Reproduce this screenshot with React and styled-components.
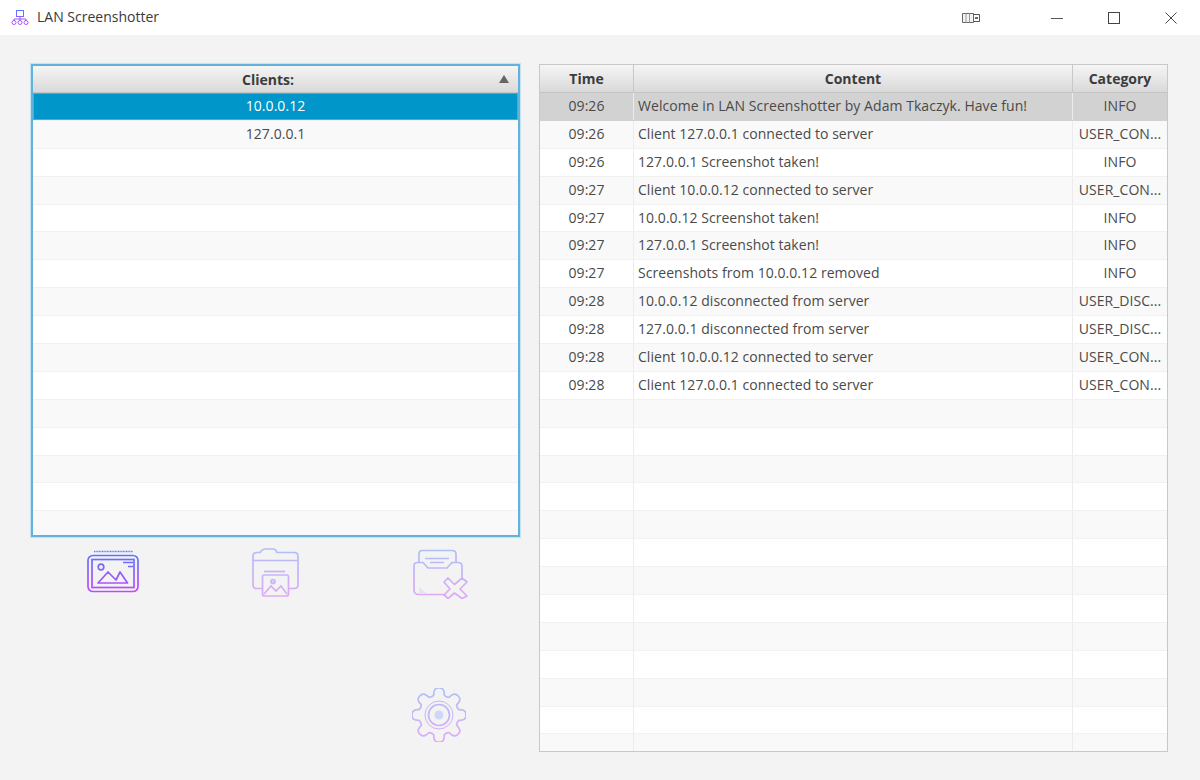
import React from 'react';
import styled, { createGlobalStyle } from 'styled-components';

const GlobalStyle = createGlobalStyle`
  * {
    box-sizing: border-box;
    margin: 0;
    padding: 0;
  }
  body {
    background: #f3f3f3;
    font-family: "Open Sans", "Noto Sans", sans-serif;
    color: #333;
  }
`

const Window = styled.div`
  width: 1200px;
  height: 780px;
  overflow: hidden;
  display: flex;
  flex-direction: column;
`
const TitleBar = styled.div`
  height: 35px;
  flex: none;
  background: #fff;
  display: flex;
  align-items: center;
  padding: 0 1px 0 11px;
`
const AppTitle = styled.span`
  font-size: 14px;
  color: #3a3a3a;
  margin: 0 0 2px 8px;
  flex: 1;
`
const TrayButton = styled.div`
  width: 20px;
  height: 12px;
  margin-right: 47px;
  display: flex;
`
const WinButton = styled.div`
  width: 57px;
  display: flex;
  justify-content: center;
  align-items: center;
`
const Main = styled.div`
  flex: 1;
  min-height: 0;
  display: flex;
  padding: 29px 32px 28px 31px;
  gap: 19px;
`
const LeftColumn = styled.div`
  width: 489px;
  flex: none;
  display: flex;
  flex-direction: column;
`
const ClientsTable = styled.div`
  height: 473px;
  flex: none;
  background: #fff;
  border: 2px solid #62b2dc;
  box-shadow: 0 0 1px 1px #c6e3f2;
  overflow: hidden;
  display: flex;
  flex-direction: column;
`
const LogTable = styled.div`
  flex: 1;
  min-height: 0;
  background: #fff;
  border: 1px solid #c8c8c8;
  overflow: hidden;
  display: flex;
  flex-direction: column;
`
const HeaderRow = styled.div`
  height: ${p => p.$height || 28}px;
  flex: none;
  display: flex;
  background: linear-gradient(#f5f5f5, #d9d9d9);
  border-bottom: 1px solid #c4c4c4;
`
const HeaderCell = styled.div`
  position: relative;
  flex: ${p => p.$flex ? 1 : 'none'};
  width: ${p => p.$width ? p.$width + 'px' : 'auto'};
  display: flex;
  align-items: center;
  justify-content: center;
  padding-right: ${p => p.$sorted ? '15px' : '0'};
  font-size: 14px;
  font-weight: 700;
  color: #3c3c3c;
  border-right: ${p => p.$last ? 'none' : '1px solid #c8c8c8'};
`
const SortArrow = styled.span`
  position: absolute;
  right: 9px;
  top: 9px;
  width: 0;
  height: 0;
  border-left: 5.5px solid transparent;
  border-right: 5.5px solid transparent;
  border-bottom: 8px solid #666;
`
const Row = styled.div`
  height: 27.9px;
  flex: none;
  display: flex;
  align-items: center;
  font-size: 14px;
  color: ${p => p.$active ? '#fff' : '#4a4a4a'};
  background: ${p => p.$active ? '#0096c9' : p.$selected ? '#d2d2d2' : p.$odd ? '#f9f9f9' : '#fff'};
  box-shadow: ${p => p.$active ? 'inset 0 0 0 1px #3fb0d8' : 'none'};
  border-bottom: 1px solid ${p => p.$selected ? '#d2d2d2' : '#f1f1f1'};
`
const Cell = styled.div`
  flex: ${p => p.$flex ? 1 : 'none'};
  width: ${p => p.$width ? p.$width + 'px' : 'auto'};
  height: 100%;
  display: flex;
  align-items: center;
  justify-content: ${p => p.$left ? 'flex-start' : 'center'};
  padding: 0 4px 2px;
  letter-spacing: 0.05px;
  white-space: nowrap;
  overflow: hidden;
  border-right: ${p => p.$last ? 'none' : '1px solid #ececec'};
`
const ToolGrid = styled.div`
  display: grid;
  grid-template-columns: repeat(3, 163px);
  grid-template-rows: 72px 123px;
  padding-top: 10px;
`
const ToolButton = styled.div`
  display: flex;
  justify-content: center;
  align-items: ${p => p.$bottom ? 'flex-end' : 'flex-start'};
  padding-top: ${p => p.$drop || 0}px;
  opacity: ${p => p.$dim ? 0.42 : 1};
  grid-column: ${p => p.$column || 'auto'};
`
const RightColumn = styled.div`
  flex: 1;
  min-height: 0;
  display: flex;
  flex-direction: column;
`

const Grad = ({ id, y1, y2 }) => (
  <defs>
    <linearGradient id={id} gradientUnits="userSpaceOnUse" x1="0" x2="0" y1={y1} y2={y2}>
      <stop offset="0" stopColor="#4f7bff" />
      <stop offset="1" stopColor="#c845ff" />
    </linearGradient>
  </defs>
)

const AppIcon = () => (
  <svg width="18" height="17" viewBox="0 0 18 17" fill="none" stroke="url(#g-app)" strokeWidth="1">
    <Grad id="g-app" y1="0" y2="17" />
    <rect x="5.5" y="1.5" width="7" height="6" />
    <path d="M9 7.5V10M3 12V10H15V12M9 10V12" />
    <circle cx="3" cy="13.5" r="2" />
    <circle cx="9" cy="13.5" r="2" />
    <circle cx="15" cy="13.5" r="2" />
  </svg>
)

const TrayIcon = () => (
  <svg width="20" height="12" viewBox="0 0 20 12" fill="none">
    <path d="M1.5 1.5H12.5V10.5H1.5Z" fill="#f4f4f4" stroke="#666" />
    <path d="M5 1.5V10.5M8.5 1.5V10.5" stroke="#999" />
    <path d="M12.5 2.5H18.5V9.5H12.5" stroke="#555" />
    <path d="M14 6H17" stroke="#333" strokeWidth="1.5" />
  </svg>
)

const MinimizeIcon = () => (
  <svg width="12" height="12" viewBox="0 0 12 12" stroke="#555">
    <path d="M0 6.5H12" />
  </svg>
)
const MaximizeIcon = () => (
  <svg width="12" height="12" viewBox="0 0 12 12" fill="none" stroke="#444">
    <rect x="0.5" y="0.5" width="11" height="11" />
  </svg>
)
const CloseIcon = () => (
  <svg width="12" height="12" viewBox="0 0 12 12" stroke="#444">
    <path d="M0.5 0.5L11.5 11.5M11.5 0.5L0.5 11.5" />
  </svg>
)

const PictureIcon = () => (
  <svg width="54" height="44" viewBox="0 0 54 44" fill="none" stroke="url(#g-pic)" strokeWidth="1.7">
    <Grad id="g-pic" y1="0" y2="44" />
    <path d="M8 1.5H47" strokeDasharray="1 0.6" />
    <rect x="2" y="5.5" width="50" height="36" rx="5" />
    <rect x="6" y="9.5" width="42" height="28" />
    <circle cx="15" cy="17" r="2.8" />
    <path d="M12 33L22 22L30 30L34 22L41.500 33Z" strokeLinejoin="round" />
    <path d="M37 12.500H47M42 16.500H47" />
  </svg>
)

const FolderPictureIcon = () => (
  <svg width="48" height="50" viewBox="0 0 48 50" fill="none" stroke="url(#g-fp)" strokeWidth="1.7">
    <Grad id="g-fp" y1="0" y2="50" />
    <path d="M11 40.500H5Q1 40.500 1 37V8Q1 4.500 5 4.500H8Q10 1 14 1H21Q24 1 25 4.500H42Q46 4.500 46 8V37Q46 40.500 42 40.500H37" />
    <path d="M1 12.500H46" />
    <path d="M12 23.500H33" />
    <rect x="10.500" y="27" width="26" height="21" rx="2" />
    <circle cx="21" cy="33.500" r="2" fill="#a9b8ff" />
    <path d="M12 46L19 38L24 43L29 38L35 46" />
  </svg>
)

const TrayRemoveIcon = () => (
  <svg width="60" height="50" viewBox="-4 0 60 50" fill="none" stroke="url(#g-tr)" strokeWidth="1.7">
    <Grad id="g-tr" y1="0" y2="50" />
    <path d="M6 14V5Q6 1.500 9 1.500H39Q43 1.500 43 5V14" />
    <path d="M12 9.500H36M17 13.500H31" />
    <path d="M33 45.500H6Q1 45.500 1 41V17Q1 13.500 4.500 13.500H10L15 19H34L39 13.500H45Q49 13.500 49 17V30" />
    <path d="M6 38V44H13Z" fill="#d6c6ff" stroke="none" />
    <path d="M35 29L41.500 35.500L49 29L54 33L47 40L54 47L49 49.500L41.500 44L35 49.500L31 46L37 40L31 33Z" strokeLinejoin="round" />
  </svg>
)

// 8 toothed gear outline
const gearPath = () => {
  const c = 27, ro = 26, ri = 20.5
  const pt = (r, a) => `${(c + r * Math.cos(a)).toFixed(2)} ${(c + r * Math.sin(a)).toFixed(2)}`
  const step = Math.PI / 4
  let d = ''
  for (let i = 0; i < 8; i++) {
    const a = i * step - Math.PI / 2
    d += `${i === 0 ? 'M' : 'L'}${pt(ri, a - 0.26)} Q${pt(ro + 2, a - 0.2)} ${pt(ro + 1, a)} Q${pt(ro + 2, a + 0.2)} ${pt(ri, a + 0.26)} `
    d += `Q${pt(ri - 1.5, a + step / 2)} ${pt(ri, a + step - 0.26)} `
  }
  return d + 'Z'
}

const GearIcon = () => (
  <svg width="54" height="54" viewBox="0 0 54 54" fill="none" stroke="url(#g-gear)" strokeWidth="1.7">
    <Grad id="g-gear" y1="0" y2="54" />
    <path d={gearPath()} strokeLinejoin="round" />
    <circle cx="27" cy="27" r="14" strokeWidth="1" />
    <circle cx="27" cy="27" r="10.500" />
    <circle cx="27" cy="27" r="4.500" fill="#9fb0ff" stroke="none" />
  </svg>
)

const logs = [
  ['09:26', 'Welcome in LAN Screenshotter by Adam Tkaczyk. Have fun!', 'INFO'],
  ['09:26', 'Client 127.0.0.1 connected to server', 'USER_CON...'],
  ['09:26', '127.0.0.1 Screenshot taken!', 'INFO'],
  ['09:27', 'Client 10.0.0.12 connected to server', 'USER_CON...'],
  ['09:27', '10.0.0.12 Screenshot taken!', 'INFO'],
  ['09:27', '127.0.0.1 Screenshot taken!', 'INFO'],
  ['09:27', 'Screenshots from 10.0.0.12 removed', 'INFO'],
  ['09:28', '10.0.0.12 disconnected from server', 'USER_DISC...'],
  ['09:28', '127.0.0.1 disconnected from server', 'USER_DISC...'],
  ['09:28', 'Client 10.0.0.12 connected to server', 'USER_CON...'],
  ['09:28', 'Client 127.0.0.1 connected to server', 'USER_CON...'],
]
const clients = ['10.0.0.12', '127.0.0.1']

function App() {
  return (
    <Window>
      <GlobalStyle />
      <TitleBar>
        <AppIcon />
        <AppTitle>LAN Screenshotter</AppTitle>
        <TrayButton><TrayIcon /></TrayButton>
        <WinButton><MinimizeIcon /></WinButton>
        <WinButton><MaximizeIcon /></WinButton>
        <WinButton><CloseIcon /></WinButton>
      </TitleBar>
      <Main>
        <LeftColumn>
          <ClientsTable>
            <HeaderRow $height={27}>
              <HeaderCell $flex $last $sorted>Clients:<SortArrow /></HeaderCell>
            </HeaderRow>
            {Array.from({ length: 16 }).map((_, i) => (
              <Row key={i} $active={i === 0} $odd={i % 2 === 1}>
                <Cell $flex $last>{clients[i]}</Cell>
              </Row>
            ))}
          </ClientsTable>
          <ToolGrid>
            <ToolButton $drop={3}><PictureIcon /></ToolButton>
            <ToolButton $dim $drop={1}><FolderPictureIcon /></ToolButton>
            <ToolButton $dim $drop={2}><TrayRemoveIcon /></ToolButton>
            <ToolButton $dim $bottom $column="3"><GearIcon /></ToolButton>
          </ToolGrid>
        </LeftColumn>
        <RightColumn>
          <LogTable>
            <HeaderRow>
              <HeaderCell $width={94}>Time</HeaderCell>
              <HeaderCell $flex>Content</HeaderCell>
              <HeaderCell $width={94} $last>Category</HeaderCell>
            </HeaderRow>
            {Array.from({ length: 24 }).map((_, i) => {
              const log = logs[i] || ['', '', '']
              return (
                <Row key={i} $selected={i === 0} $odd={i % 2 === 1}>
                  <Cell $width={94}>{log[0]}</Cell>
                  <Cell $flex $left>{log[1]}</Cell>
                  <Cell $width={94} $last>{log[2]}</Cell>
                </Row>
              )
            })}
          </LogTable>
        </RightColumn>
      </Main>
    </Window>
  )
}

export default App;
